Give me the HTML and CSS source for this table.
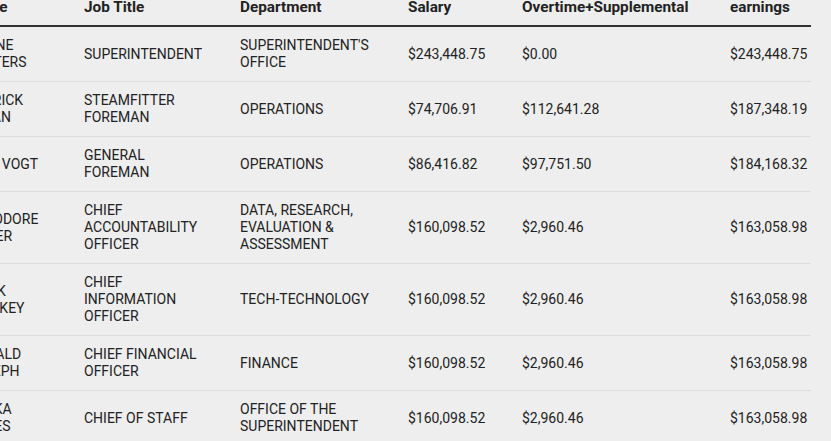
FILE: index.html
```html
<!DOCTYPE html>
<html lang="en">
<head>
<meta charset="utf-8">
<title>Earnings</title>
<link rel="stylesheet" href="styles.css">
</head>
<body>
<div class="viewport">
<table class="earnings">
  <colgroup>
    <col class="c-name">
    <col class="c-job">
    <col class="c-dept">
    <col class="c-salary">
    <col class="c-ot">
    <col class="c-total">
  </colgroup>
  <thead>
    <tr>
      <th>Name</th>
      <th>Job Title</th>
      <th>Department</th>
      <th>Salary</th>
      <th>Overtime+Supplemental</th>
      <th>Total earnings</th>
    </tr>
  </thead>
  <tbody>
    <tr>
      <td>ELAINE<br>KOETERS</td>
      <td>SUPERINTENDENT</td>
      <td>SUPERINTENDENT'S<br>OFFICE</td>
      <td>$243,448.75</td>
      <td>$0.00</td>
      <td>$243,448.75</td>
    </tr>
    <tr>
      <td>DERRICK<br>BRYAN</td>
      <td>STEAMFITTER<br>FOREMAN</td>
      <td>OPERATIONS</td>
      <td>$74,706.91</td>
      <td>$112,641.28</td>
      <td>$187,348.19</td>
    </tr>
    <tr>
      <td>IVAN VOGT</td>
      <td>GENERAL<br>FOREMAN</td>
      <td>OPERATIONS</td>
      <td>$86,416.82</td>
      <td>$97,751.50</td>
      <td>$184,168.32</td>
    </tr>
    <tr>
      <td>THEODORE<br>MEYER</td>
      <td>CHIEF<br>ACCOUNTABILITY<br>OFFICER</td>
      <td>DATA, RESEARCH,<br>EVALUATION &amp;<br>ASSESSMENT</td>
      <td>$160,098.52</td>
      <td>$2,960.46</td>
      <td>$163,058.98</td>
    </tr>
    <tr>
      <td>MARK<br>FLECKEY</td>
      <td>CHIEF<br>INFORMATION<br>OFFICER</td>
      <td>TECH-TECHNOLOGY</td>
      <td>$160,098.52</td>
      <td>$2,960.46</td>
      <td>$163,058.98</td>
    </tr>
    <tr>
      <td>RONALD<br>JOSEPH</td>
      <td>CHIEF FINANCIAL<br>OFFICER</td>
      <td>FINANCE</td>
      <td>$160,098.52</td>
      <td>$2,960.46</td>
      <td>$163,058.98</td>
    </tr>
    <tr>
      <td>JANKA<br>JONES</td>
      <td>CHIEF OF STAFF</td>
      <td>OFFICE OF THE<br>SUPERINTENDENT</td>
      <td>$160,098.52</td>
      <td>$2,960.46</td>
      <td>$163,058.98</td>
    </tr>
  </tbody>
</table>
</div>
</body>
</html>
```

FILE: styles.css
```css
html, body {
  margin: 0;
  padding: 0;
  background: #eeeeee;
}

body {
  font-family: Roboto, "Liberation Sans", Arial, sans-serif;
  font-size: 14px;
  line-height: 17px;
  color: #222222;
  overflow: hidden;
}

.viewport {
  width: 831px;
  height: 441px;
  overflow: hidden;
}

.earnings {
  border-collapse: collapse;
  table-layout: fixed;
  width: 844px;
  margin: -28px 0 0 -33px;
}

.c-name { width: 117px; }
.c-job { width: 156px; }
.c-dept { width: 168px; }
.c-salary { width: 114px; }
.c-ot { width: 208px; }
.c-total { width: 81px; }

.earnings th {
  font-size: 15.3px;
  font-weight: 700;
  text-align: left;
  vertical-align: bottom;
  padding: 10px 4px 9px 0;
  border-bottom: 2px solid #333333;
}

.earnings td {
  text-align: left;
  vertical-align: middle;
  padding: 10px 4px 10px 0;
  border-bottom: 1px solid #dcdcdc;
}
```
